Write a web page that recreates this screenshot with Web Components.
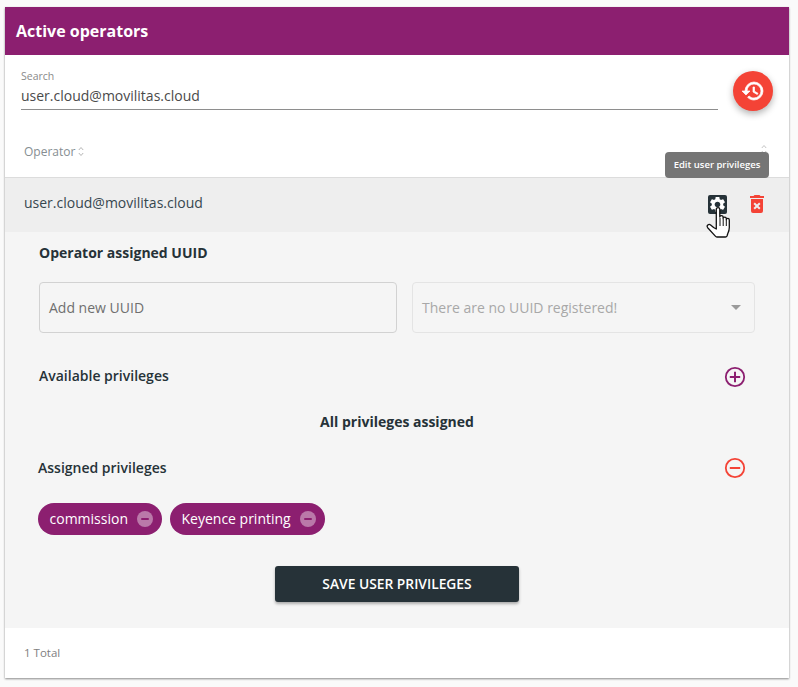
<!doctype html>
<html><head><meta charset="utf-8">
<style>
html,body{margin:0;background:#fafafa}
body{font-family:"Open Sans",sans-serif;color:#333;height:687px;overflow:hidden;padding:7px 9px 0 5px;box-sizing:border-box}
</style></head><body>
<operators-card>
  <span slot="title">Active operators</span>
  <search-bar label="Search" value="user.cloud@movilitas.cloud"></search-bar>
  <table-head>Operator</table-head>
  <operator-row>user.cloud@movilitas.cloud</operator-row>
  <privileges-panel>
    <panel-chip>commission</panel-chip>
    <panel-chip>Keyence printing</panel-chip>
  </privileges-panel>
  <span slot="footer">1 Total</span>
</operators-card>
<script>
function def(name,html){
  customElements.define(name,class extends HTMLElement{
    constructor(){super();const r=this.attachShadow({mode:"open"});
      r.innerHTML=html;}
    connectedCallback(){
      const r=this.shadowRoot;
      r.querySelectorAll("[data-attr]").forEach(e=>{e.textContent=this.getAttribute(e.dataset.attr)||""});
    }
  });
}
def("operators-card",`<style>
:host{display:block;width:784px;background:#fff;box-shadow:0 1px 2px rgba(0,0,0,.45)}
header{height:48px;background:#8c1f70;color:#fff;font:700 16px/48px "Open Sans",sans-serif;padding-left:11px}
footer{height:48px;display:flex;align-items:center;padding:0 0 2px 19px;font:11.5px "Open Sans",sans-serif;color:#808080}
</style><header><slot name="title"></slot></header><slot></slot><footer><slot name="footer"></slot></footer>`);
def("search-bar",`<style>
:host{display:flex;height:75px;box-sizing:border-box;padding:15px 16px 0;gap:15px;align-items:flex-start}
.f{flex:1;height:39px;border-bottom:1px solid #8e8e8e}
label{display:block;font:10.5px/12px "Open Sans",sans-serif;color:#8a8a8a}
.v{font:14px/22px "Open Sans",sans-serif;color:#4a4a4a;margin-top:3px}
.fab{width:40px;height:40px;border-radius:50%;background:#f44336;box-shadow:0 3px 7px rgba(0,0,0,.3);display:flex;align-items:center;justify-content:center;margin-top:1px}
</style><div class="f"><label data-attr="label"></label><div class="v" data-attr="value"></div></div>
<div class="fab"><svg width="24" height="24" viewBox="0 0 24 24"><path fill="#fff" stroke="#fff" stroke-width=".7" d="M13,3A9,9 0 0,0 4,12H1L4.89,15.89L4.96,16.03L9,12H6A7,7 0 0,1 13,5A7,7 0 0,1 20,12A7,7 0 0,1 13,19C11.07,19 9.32,18.21 8.06,16.94L6.64,18.36C8.27,20 10.5,21 13,21A9,9 0 0,0 22,12A9,9 0 0,0 13,3M12,8V13L16.28,15.54L17,14.33L13.5,12.25V8H12Z"/></svg></div>`);
def("table-head",`<style>
:host{display:flex;align-items:center;height:48px;box-sizing:border-box;padding:0 19px 5px;border-bottom:1px solid #dcdcdc;font:12px "Open Sans",sans-serif;color:#868e92;gap:3px;position:relative}
svg{display:block}
.r{position:absolute;left:755px;top:14px}
</style><slot></slot><svg width="6" height="11" viewBox="0 0 6 11" fill="none" stroke="#b5b5b5"><path d="M.8 4 3 1.5 5.2 4M.8 7 3 9.5 5.2 7"/></svg>
<svg class="r" width="8" height="11" viewBox="0 0 6 11" fill="none" stroke="#c4c4c4"><path d="M.8 4 3 1.5 5.2 4M.8 7 3 9.5 5.2 7"/></svg>`);
def("operator-row",`<style>
:host{display:flex;align-items:center;height:54px;box-sizing:border-box;padding:0 0 5px 19px;background:#eee;font:14px "Open Sans",sans-serif;color:#37474f;position:relative}
.tip{position:absolute;left:660px;top:-26px;width:104px;height:26px;border-radius:4px;background:#757575;color:#fff;font:600 9.5px/26px "Open Sans",sans-serif;text-align:center}
.gear{position:absolute;left:703px;top:17px;width:19px;height:19px;background:#263238;border-radius:2px;display:flex;align-items:center;justify-content:center}
.del{position:absolute;left:740px;top:14px}
.hand{position:absolute;left:701px;top:28px}
</style><slot></slot>
<div class="tip">Edit user privileges</div>
<div class="gear"><svg width="19" height="19" viewBox="0 0 24 24"><path fill="#fff" d="M19.14 12.94c.04-.3.06-.61.06-.94 0-.32-.02-.64-.07-.94l2.03-1.58c.18-.14.23-.41.12-.61l-1.92-3.32c-.12-.22-.37-.29-.59-.22l-2.39.96c-.5-.38-1.03-.7-1.62-.94l-.36-2.54c-.04-.24-.24-.41-.48-.41h-3.84c-.24 0-.43.17-.47.41l-.36 2.54c-.59.24-1.13.57-1.62.94l-2.39-.96c-.22-.08-.47 0-.59.22L2.74 8.87c-.12.21-.08.47.12.61l2.03 1.58c-.05.3-.09.63-.09.94s.02.64.07.94l-2.03 1.58c-.18.14-.23.41-.12.61l1.92 3.32c.12.22.37.29.59.22l2.39-.96c.5.38 1.03.7 1.62.94l.36 2.54c.05.24.24.41.48.41h3.84c.24 0 .44-.17.47-.41l.36-2.54c.59-.24 1.13-.56 1.62-.94l2.39.96c.22.08.47 0 .59-.22l1.92-3.32c.12-.22.07-.47-.12-.61l-2.01-1.58zM12 15.6c-1.98 0-3.6-1.62-3.6-3.6s1.62-3.6 3.6-3.6 3.6 1.62 3.6 3.6-1.62 3.6-3.6 3.6z"/></svg></div>
<svg class="del" width="24" height="24" viewBox="0 0 24 24"><path fill="#f44336" d="M6 19a2 2 0 0 0 2 2h8a2 2 0 0 0 2-2V7H6zM8.46 11.88l1.41-1.41L12 12.59l2.12-2.12 1.41 1.41L13.41 14l2.12 2.12-1.41 1.41L12 15.41l-2.12 2.12-1.41-1.41L10.59 14zM15.5 4l-1-1h-5l-1 1H5v2h14V4z"/></svg>
<svg class="hand" width="26" height="33" viewBox="0 0 26 33"><path fill="#fff" stroke="#111" stroke-width="1.3" stroke-linejoin="round" d="M10.3 17V3.2c0-2.2 3.5-2.2 3.5 0V11c0-1.9 3.3-1.9 3.3 0v1.500c0-1.800 3.200-1.800 3.200 0v1.200c0-1.700 3-1.700 3 .2v7.600c0 2.800-.6 4.300-1.500 6l-.8 2.500c-.3.8-.8 1-1.600 1H11c-.8 0-1.300-.4-1.900-1.100L1.700 21.700c-1.600-2 1-4.200 2.900-2.700l3 2.500 2.700 1.500z"/><path fill="none" stroke="#111" d="M14 12v8M17.200 13v7M20.300 14v6"/></svg>`);
def("privileges-panel",`<style>
:host{display:block;height:396px;box-sizing:border-box;padding:11px 34px 0;background:#f5f5f5;color:#263238;font:14px/20px "Open Sans",sans-serif}
h3{margin:0;font:700 14px/20px "Open Sans",sans-serif;color:#263238}
.grid{display:grid;grid-template-columns:358px 343px;gap:15px;margin-top:19px}
.box{height:51px;box-sizing:border-box;border:1px solid #d2d2d2;border-radius:4px;padding:0 9px;display:flex;align-items:center;justify-content:space-between;font:14px "Open Sans",sans-serif;color:#6f6f6f}
.box.dis{border-color:#e4e4e4;color:#a8a8a8}
.tri{width:0;height:0;border:5px solid transparent;border-top:5px solid #9a9a9a;border-bottom:0;margin-right:4px}
.sec{display:flex;align-items:center;justify-content:space-between;height:24px;padding-right:9px}
.sec h3{font-weight:600}
.all{text-align:center;font-weight:700;margin-top:24px}
.chips{display:flex;gap:8px;margin-top:23px;margin-left:-1px}
.btn{display:block;width:244px;height:36px;margin:31px auto 0;background:#263238;color:#fff;border-radius:3px;font:600 13.8px/36px "Open Sans",sans-serif;text-align:center;box-shadow:0 2px 3px rgba(0,0,0,.3)}
svg{display:block}
.sec svg.plus{margin-top:2px}
</style>
<h3>Operator assigned UUID</h3>
<div class="grid"><div class="box">Add new UUID</div><div class="box dis">There are no UUID registered!<span class="tri"></span></div></div>
<div class="sec" style="margin-top:31px"><h3>Available privileges</h3>
<svg class="plus" width="22" height="22" viewBox="0 0 22 22" fill="none" stroke="#8c1f70" stroke-width="1.8"><circle cx="11" cy="11" r="9.200"/><path stroke-width="2" d="M11 5.800v10.400M5.800 11h10.400"/></svg></div>
<div class="all">All privileges assigned</div>
<div class="sec" style="margin-top:24px;margin-left:-1px"><h3>Assigned privileges</h3>
<svg width="22" height="22" viewBox="0 0 22 22" fill="none" stroke="#f44336" stroke-width="1.8"><circle cx="11" cy="11" r="9.200"/><path stroke-width="2" d="M5.800 11h10.400"/></svg></div>
<div class="chips"><slot></slot></div>
<div class="btn">SAVE USER PRIVILEGES</div>`);
def("panel-chip",`<style>
:host{display:inline-flex;align-items:center;height:32px;border-radius:16px;background:#8c1f70;color:#fff;font:14px "Open Sans",sans-serif;padding:0 9px 0 11.5px;gap:9px}
b{font-weight:400;margin-bottom:2px}
i{display:flex;align-items:center;justify-content:center;width:16px;height:16px;border-radius:50%;background:#ba79a9}
i::after{content:"";width:8px;height:2.5px;background:#8c1f70;border-radius:1px}
</style><b><slot></slot></b><i></i>`);
</script>
</body></html>
